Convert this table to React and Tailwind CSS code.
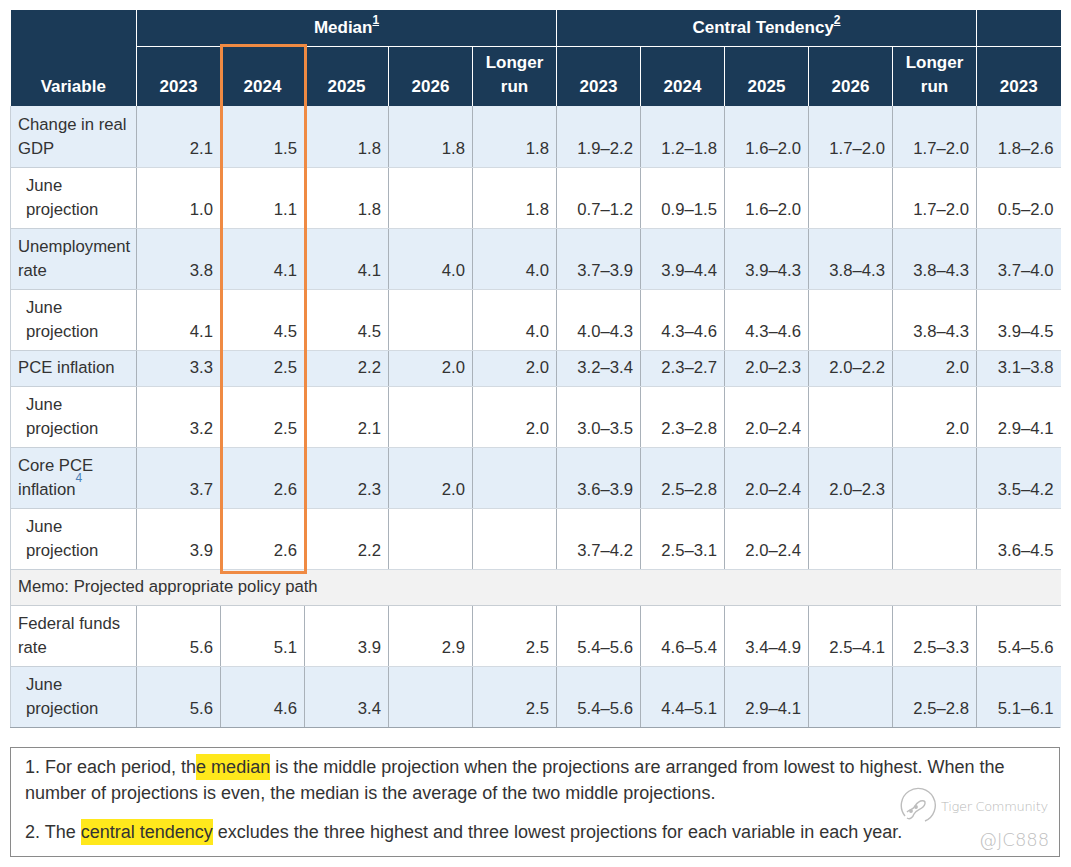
import React from 'react';

// Summary of Economic Projections table (Sept 2023 SEP), with a highlight box over 2024.

const rows = [
  { label: ['Change in real', 'GDP'], bg: 'blue', vals: ['2.1', '1.5', '1.8', '1.8', '1.8', '1.9–2.2', '1.2–1.8', '1.6–2.0', '1.7–2.0', '1.7–2.0', '1.8–2.6'] },
  { label: ['June', 'projection'], sub: true, bg: 'white', vals: ['1.0', '1.1', '1.8', '', '1.8', '0.7–1.2', '0.9–1.5', '1.6–2.0', '', '1.7–2.0', '0.5–2.0'] },
  { label: ['Unemployment', 'rate'], bg: 'blue', vals: ['3.8', '4.1', '4.1', '4.0', '4.0', '3.7–3.9', '3.9–4.4', '3.9–4.3', '3.8–4.3', '3.8–4.3', '3.7–4.0'] },
  { label: ['June', 'projection'], sub: true, bg: 'white', vals: ['4.1', '4.5', '4.5', '', '4.0', '4.0–4.3', '4.3–4.6', '4.3–4.6', '', '3.8–4.3', '3.9–4.5'] },
  { label: ['PCE inflation'], bg: 'blue', vals: ['3.3', '2.5', '2.2', '2.0', '2.0', '3.2–3.4', '2.3–2.7', '2.0–2.3', '2.0–2.2', '2.0', '3.1–3.8'] },
  { label: ['June', 'projection'], sub: true, bg: 'white', vals: ['3.2', '2.5', '2.1', '', '2.0', '3.0–3.5', '2.3–2.8', '2.0–2.4', '', '2.0', '2.9–4.1'] },
  { label: ['Core PCE', 'inflation'], sup: '4', bg: 'blue', vals: ['3.7', '2.6', '2.3', '2.0', '', '3.6–3.9', '2.5–2.8', '2.0–2.4', '2.0–2.3', '', '3.5–4.2'] },
  { label: ['June', 'projection'], sub: true, bg: 'white', vals: ['3.9', '2.6', '2.2', '', '', '3.7–4.2', '2.5–3.1', '2.0–2.4', '', '', '3.6–4.5'] },
  { memo: 'Memo: Projected appropriate policy path' },
  { label: ['Federal funds', 'rate'], bg: 'white', vals: ['5.6', '5.1', '3.9', '2.9', '2.5', '5.4–5.6', '4.6–5.4', '3.4–4.9', '2.5–4.1', '2.5–3.3', '5.4–5.6'] },
  { label: ['June', 'projection'], sub: true, bg: 'blue', vals: ['5.6', '4.6', '3.4', '', '2.5', '5.4–5.6', '4.4–5.1', '2.9–4.1', '', '2.5–2.8', '5.1–6.1'] },
];

const years = ['2023', '2024', '2025', '2026'];

function YearHead({ children }) {
  return (
    <th className="border-l border-white align-bottom text-center px-1 pb-[7px] pt-0 leading-6 font-bold">
      {children}
    </th>
  );
}

function LongerRun() {
  return (
    <YearHead>
      Longer
      <br />
      run
    </YearHead>
  );
}

export default function App() {
  return (
    <div className="w-[1071px] h-[867px] bg-white overflow-hidden text-[#333] font-['Liberation_Sans',Arial,sans-serif]">
      <div className="relative ml-[10px] mt-[10px] w-[1050px]">
        <table className="table-fixed w-[1050px] border-collapse text-[16.7px]">
          <colgroup>
            <col className="w-[126px]" />
            {Array.from({ length: 11 }, (_, i) => (
              <col key={i} className="w-[84px]" />
            ))}
          </colgroup>
          <thead className="bg-[#1b3a57] text-white text-[17px]">
            <tr className="h-[36px]">
              <th rowSpan={2} className="align-bottom text-center pb-[7px] leading-6 font-bold">
                Variable
              </th>
              <th colSpan={5} className="border-l border-b border-white text-center align-middle font-bold">
                Median<sup className="underline text-[12px] align-[3px]">1</sup>
              </th>
              <th colSpan={5} className="border-l border-b border-white text-center align-middle font-bold">
                Central Tendency<sup className="underline text-[12px] align-[3px]">2</sup>
              </th>
              <th className="border-l border-b border-white"></th>
            </tr>
            <tr className="h-[60px]">
              {years.map((y) => (
                <YearHead key={'m' + y}>{y}</YearHead>
              ))}
              <LongerRun />
              {years.map((y) => (
                <YearHead key={'c' + y}>{y}</YearHead>
              ))}
              <LongerRun />
              <YearHead>2023</YearHead>
            </tr>
          </thead>
          <tbody>
            {rows.map((r, i) => {
              if (r.memo) {
                return (
                  <tr key={i} className="h-[36px] bg-[#f2f2f2]">
                    <td colSpan={12} className="border-l border-b border-[#c8ced4] px-[7px] align-middle leading-6">
                      {r.memo}
                    </td>
                  </tr>
                );
              }
              const single = r.label.length === 1;
              return (
                <tr key={i} className={(single ? 'h-[36px] ' : 'h-[61px] ') + (r.bg === 'blue' ? 'bg-[#e4eef8]' : 'bg-white')}>
                  <td className={'border-l border-b border-[#c8d0d8] align-bottom leading-6 pb-[6px] pt-0 pr-1 ' + (r.sub ? 'pl-[15px]' : 'pl-[7px]')}>
                    {r.label.map((l, j) => (
                      <React.Fragment key={j}>
                        {j > 0 && <br />}
                        {l}
                      </React.Fragment>
                    ))}
                    {r.sup && <sup className="text-[12px] text-[#4a7fb5] align-[7px]">{r.sup}</sup>}
                  </td>
                  {r.vals.map((v, j) => (
                    <td
                      key={j}
                      className="border-l border-b border-l-[#a9b1b9] border-b-[#d3dae1] align-bottom text-right leading-6 pb-[6px] pr-[7px] whitespace-nowrap"
                    >
                      {v}
                    </td>
                  ))}
                </tr>
              );
            })}
          </tbody>
        </table>
        <div className="absolute left-0 bottom-0 w-[1050px] h-px bg-[#9aa3ac]" />
        {/* orange highlight around the 2024 median column */}
        <div className="absolute left-[210px] top-[34px] w-[87px] h-[530px] border-[3px] border-[#ef8a43] pointer-events-none" />
      </div>

      <div className="relative ml-[10px] mt-[19px] w-[1050px] border border-[#8a8a8a] pl-[14px] pr-3 pt-[6px] pb-[11px] text-[18px] leading-[26px] text-[#333]">
        <p>
          1. For each period, th<span className="bg-[#ffe81c] py-[3px]">e median</span> is the middle projection when the projections are
          arranged from lowest to highest. When the number of projections is even, the median is the average of the two middle projections.
        </p>
        <p className="mt-[13px]">
          2. The <span className="bg-[#ffe81c] py-[3px]">central tendency</span> excludes the three highest and three lowest projections for
          each variable in each year.
        </p>
        {/* watermark */}
        <div className="absolute left-[886px] top-[38px] flex items-center gap-[4px] text-[#b8b8b8]">
          <svg width="40" height="40" viewBox="0 0 40 40" fill="none" stroke="#bdbdbd" strokeWidth="1.4">
            <path d="M8 30 A17 17 0 1 1 28 35" />
            <path d="M10 26 c3 -3 6 -2 8 -6 c2 -3 5 -6 9 -5 c2 1 1 4 -1 6 c-3 3 -7 3 -9 7 c-1 3 -4 6 -7 4" />
            <circle cx="14" cy="25" r="1.2" fill="#bdbdbd" />
            <circle cx="19" cy="21" r="1.2" fill="#bdbdbd" />
          </svg>
          <span className="text-[13px] font-['DejaVu_Sans',sans-serif] font-light tracking-tight mt-[2px]">Tiger Community</span>
        </div>
        <div className="absolute left-[968px] top-[79px] text-[18px] text-[#c0c0c0] font-['DejaVu_Sans',sans-serif] font-extralight">
          @JC888
        </div>
      </div>
    </div>
  );
}
